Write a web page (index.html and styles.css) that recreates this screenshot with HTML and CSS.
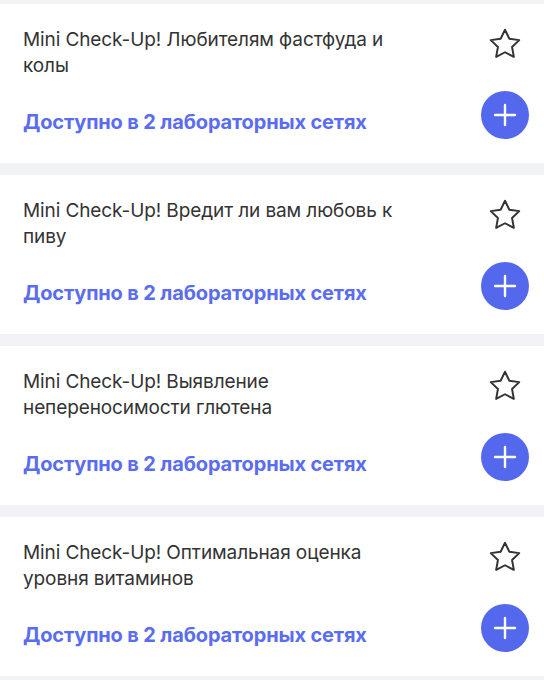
FILE: index.html
```html
<!DOCTYPE html>
<html lang="ru">
<head>
    <meta charset="UTF-8">
    <meta name="viewport" content="width=device-width, initial-scale=1.0">
    <title>Mini Check-Up</title>
    <link rel="stylesheet" href="styles.css">
</head>
<body>
    <ul class="tests">
        <li class="test-card">
            <p class="test-title">Mini Check-Up! Любителям фастфуда и колы</p>
            <button class="fav-btn" aria-label="В избранное">
                <svg width="36" height="36" viewBox="0 0 24 24"><polygon points="12,2.5 14.9,8.5 21.5,9.4 16.7,14 17.9,20.6 12,17.5 6.1,20.6 7.3,14 2.5,9.4 9.1,8.5"/></svg>
            </button>
            <a class="test-labs" href="#">Доступно в 2 лабораторных сетях</a>
            <button class="add-btn" aria-label="Добавить">
                <svg width="24" height="24" viewBox="0 0 24 24"><path d="M12 2v20M2 12h20"/></svg>
            </button>
        </li>
        <li class="test-card">
            <p class="test-title">Mini Check-Up! Вредит ли вам любовь к пиву</p>
            <button class="fav-btn" aria-label="В избранное">
                <svg width="36" height="36" viewBox="0 0 24 24"><polygon points="12,2.5 14.9,8.5 21.5,9.4 16.7,14 17.9,20.6 12,17.5 6.1,20.6 7.3,14 2.5,9.4 9.1,8.5"/></svg>
            </button>
            <a class="test-labs" href="#">Доступно в 2 лабораторных сетях</a>
            <button class="add-btn" aria-label="Добавить">
                <svg width="24" height="24" viewBox="0 0 24 24"><path d="M12 2v20M2 12h20"/></svg>
            </button>
        </li>
        <li class="test-card">
            <p class="test-title">Mini Check-Up! Выявление непереносимости глютена</p>
            <button class="fav-btn" aria-label="В избранное">
                <svg width="36" height="36" viewBox="0 0 24 24"><polygon points="12,2.5 14.9,8.5 21.5,9.4 16.7,14 17.9,20.6 12,17.5 6.1,20.6 7.3,14 2.5,9.4 9.1,8.5"/></svg>
            </button>
            <a class="test-labs" href="#">Доступно в 2 лабораторных сетях</a>
            <button class="add-btn" aria-label="Добавить">
                <svg width="24" height="24" viewBox="0 0 24 24"><path d="M12 2v20M2 12h20"/></svg>
            </button>
        </li>
        <li class="test-card">
            <p class="test-title">Mini Check-Up! Оптимальная оценка уровня витаминов</p>
            <button class="fav-btn" aria-label="В избранное">
                <svg width="36" height="36" viewBox="0 0 24 24"><polygon points="12,2.5 14.9,8.5 21.5,9.4 16.7,14 17.9,20.6 12,17.5 6.1,20.6 7.3,14 2.5,9.4 9.1,8.5"/></svg>
            </button>
            <a class="test-labs" href="#">Доступно в 2 лабораторных сетях</a>
            <button class="add-btn" aria-label="Добавить">
                <svg width="24" height="24" viewBox="0 0 24 24"><path d="M12 2v20M2 12h20"/></svg>
            </button>
        </li>
    </ul>
</body>
</html>
```

FILE: styles.css
```css
/* Global Styles */
body {
    font-family: Inter, "Noto Sans", sans-serif;
    background-color: #f2f3f7;
    color: #333;
    margin: 0;
    padding: 4px 0 0;
}
.tests {
    list-style: none;
    margin: 0;
    padding: 0;
    display: flex;
    flex-direction: column;
    gap: 12px;
}
.test-card {
    background-color: #fff;
    display: grid;
    grid-template-columns: 1fr 48px;
    column-gap: 60px;
    row-gap: 12px;
    padding: 23px 15px 24px 23px;
}
.test-title {
    margin: 0;
    font-size: 19px;
    line-height: 26px;
    letter-spacing: -0.1px;
    color: #333;
}
.fav-btn {
    justify-self: center;
    align-self: start;
    margin-top: -1px;
    width: 36px;
    height: 36px;
    padding: 0;
    border: none;
    background: none;
    cursor: pointer;
}
.fav-btn svg {
    display: block;
    fill: none;
    stroke: #333;
    stroke-width: 1.3;
    stroke-linejoin: round;
}
.test-labs {
    align-self: end;
    margin-bottom: 4px;
    font-size: 20px;
    line-height: 26px;
    font-weight: 700;
    letter-spacing: -0.15px;
    color: #5a6cf0;
    text-decoration: none;
}
.add-btn {
    width: 48px;
    height: 48px;
    border-radius: 50%;
    border: none;
    padding: 0;
    background-color: #5468ee;
    display: flex;
    align-items: center;
    justify-content: center;
    cursor: pointer;
}
.add-btn svg {
    display: block;
    fill: none;
    stroke: #fff;
    stroke-width: 2.4;
    stroke-linecap: round;
}
```
